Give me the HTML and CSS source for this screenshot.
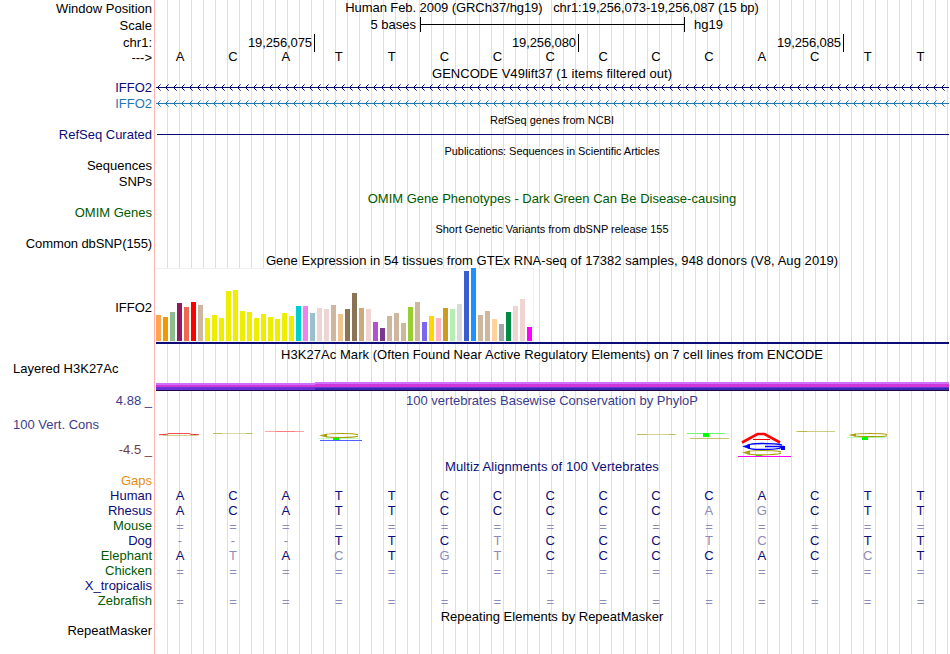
FILE: index.html
```html
<!DOCTYPE html>
<html lang="en">
<head>
    <meta charset="UTF-8">
    <title>Human chr1:19,256,073-19,256,087 hg19</title>
    <link rel="stylesheet" href="styles.css">
</head>
<body>

<div class="browser">
    <div class="row position"><div class="label">Window Position</div><div class="title">Human Feb. 2009 (GRCh37/hg19)   chr1:19,256,073-19,256,087 (15 bp)</div></div>
    <div class="row scale">
        <div class="label">Scale</div>
        <div class="scale-track"><span class="scale-size">5 bases</span><span class="scale-bar"></span><span>hg19</span></div>
    </div>
    <div class="row ruler">
        <div class="label">chr1:</div>
        <div class="ruler-track"><span>19,256,075</span><span>19,256,080</span><span>19,256,085</span></div>
    </div>
    <div class="row sequence"><div class="label arrow">---&gt;</div><div class="bases" data-bases="ACATTCCCCCCACTT"></div></div>

    <div class="row gencode-title"><div class="title gencode">GENCODE V49lift37 (1 items filtered out)</div></div>
    <div class="row gene navy">
        <div class="label">IFFO2</div>
        <svg class="gene-line" width="793" height="7" shape-rendering="crispEdges">
            <defs>
                <pattern id="chevron" width="8" height="7" patternUnits="userSpaceOnUse">
                    <path d="M1 3h1v1h-1zM2 2h1v1h-1zM2 4h1v1h-1zM3 1h1v1h-1zM3 5h1v1h-1z" fill="currentColor"/>
                    <path d="M4 0h1v1h-1zM4 6h1v1h-1z" fill="currentColor" opacity=".6"/>
                </pattern>
            </defs>
            <rect width="793" height="7" fill="url(#chevron)"/>
            <rect y="3" width="793" height="1" fill="currentColor"/>
        </svg>
    </div>
    <div class="row gene blue">
        <div class="label">IFFO2</div>
        <svg class="gene-line" width="793" height="7" shape-rendering="crispEdges">
            <defs>
                <pattern id="chevron-blue" width="8" height="7" patternUnits="userSpaceOnUse">
                    <path d="M1 3h1v1h-1zM2 2h1v1h-1zM2 4h1v1h-1zM3 1h1v1h-1zM3 5h1v1h-1z" fill="currentColor"/>
                    <path d="M4 0h1v1h-1zM4 6h1v1h-1z" fill="currentColor" opacity=".6"/>
                </pattern>
            </defs>
            <rect width="793" height="7" fill="url(#chevron-blue)"/>
            <rect y="3" width="793" height="1" fill="currentColor"/>
        </svg>
    </div>

    <div class="row small-title"><div class="title small">RefSeq genes from NCBI</div></div>
    <div class="row curated navy"><div class="label">RefSeq Curated</div><div class="solid-line"></div></div>

    <div class="row small-title"><div class="title small pubs">Publications: Sequences in Scientific Articles</div></div>
    <div class="row sequences"><div class="label">Sequences</div></div>
    <div class="row snps"><div class="label">SNPs</div></div>

    <div class="row omim-title green"><div class="title">OMIM Gene Phenotypes - Dark Green Can Be Disease-causing</div></div>
    <div class="row omim-genes green"><div class="label">OMIM Genes</div></div>

    <div class="row small-title"><div class="title small">Short Genetic Variants from dbSNP release 155</div></div>
    <div class="row common"><div class="label">Common dbSNP(155)</div></div>

    <div class="row gtex-title"><div class="title gtex">Gene Expression in 54 tissues from GTEx RNA-seq of 17382 samples, 948 donors (V8, Aug 2019)</div></div>
    <div class="row expression">
        <div class="label">IFFO2</div>
        <div class="chart-track"><div class="chart" id="chart"></div></div>
    </div>

    <div class="row h3k-title"><div class="title h3k">H3K27Ac Mark (Often Found Near Active Regulatory Elements) on 7 cell lines from ENCODE</div></div>
    <div class="row layered">
        <div class="label left">Layered H3K27Ac</div>
        <svg class="signal" width="793" height="9" shape-rendering="crispEdges">
            <rect y="1" width="793" height="2" fill="#d070ff"/>
            <rect y="3" width="793" height="2" fill="#d038d8"/>
            <rect y="5" width="793" height="3" fill="#6a34d8"/>
            <rect x="159" width="634" height="2" fill="#d070ff"/>
            <rect x="159" y="2" width="634" height="3" fill="#d038d8"/>
            <rect x="159" y="6" width="634" height="2" fill="#3828b0"/>
            <rect y="8" width="793" height="1" fill="#1c0848"/>
        </svg>
    </div>

    <div class="row phylop-title slate"><div class="label">4.88 _</div><div class="title phylop">100 vertebrates Basewise Conservation by PhyloP</div></div>
    <div class="row conservation">
        <div class="cons-labels">
            <div class="label left slate">100 Vert. Cons</div>
            <div class="label minimum">-4.5 _</div>
        </div>
        <svg class="logos" width="794" height="50" viewBox="155 409 794 50">
            <g fill="none" stroke-linecap="butt">
                <path d="M163 435.5H197" stroke="#b8b040" opacity=".6"/>
                <path d="M159 434.8L168 434.2M190 434.2L199 434.8" stroke="#f03030"/>
                <path d="M168 433.5H190" stroke="#ff5050"/>
                <path d="M213 433.5H253" stroke="#c0bc60" opacity=".55"/>
                <path d="M213 433.5H222M246 433.5H252" stroke="#b0ac30" opacity=".6"/>
                <path d="M265 431.5H304" stroke="#ff8080" opacity=".7"/>
                <path d="M276 431.5H295" stroke="#ff6060" opacity=".6"/>
                <path d="M318 438.5H360" stroke="#b0ffb0" opacity=".7"/>
                <path d="M358 434.8C355 433.5 350 433.5 341 433.5C330 433.5 324 434.3 324 435.5C324 436.8 330 437.5 341 437.5C350 437.5 355 437.5 358 436" stroke="#a8a010" stroke-width="1.2"/>
                <path d="M320 440.5H362" stroke="#5060ff"/>
                <path d="M637 434.5H676" stroke="#c0bc60" opacity=".65"/>
                <path d="M637 434.5H647M669 434.5H675" stroke="#b0ac30" opacity=".6"/>
                <path d="M687 433.5H725" stroke="#70f870"/>
                <path d="M690 438.5H729" stroke="#b8b450" opacity=".8"/>
                <path d="M742 442.5L757.5 434H764.5L780 442.5" stroke="#f00" stroke-width="2.6"/>
                <path d="M753 439.5H770" stroke="#f00"/>
                <path d="M782 445C777 443.5 770 443.5 762 443.5C752 443.5 747 444.5 747 446.5C747 448.5 752 449.5 762 449.5C770 449.5 778 449.5 782 447.5M765 446.5H784" stroke="#00f" stroke-width="1.3"/>
                <path d="M781 451.8C776 450.5 770 450.5 762 450.5C752 450.5 746 451 746 452.5C746 454 752 454.8 762 454.8C770 454.8 777 454.5 781 453.3" stroke="#a8a010" stroke-width="1.2"/>
                <path d="M738 456.5H791" stroke="#f0f"/>
                <path d="M796 431.5H835" stroke="#c0bc60" opacity=".75"/>
                <path d="M798 431.5H807" stroke="#b0ac30" opacity=".7"/>
                <path d="M847 437.5H885" stroke="#a0ffa0" opacity=".8"/>
                <path d="M887 434.5C884 433.5 878 433.5 870 433.5C859 433.5 853 434 853 435C853 436.2 859 436.6 870 436.6C878 436.6 884 436.6 887 435.7" stroke="#a8a010" stroke-width="1.2"/>
            </g>
            <path d="M319 435.5L327 433.5V437.5ZM848 435L856 433.5V436.8ZM742 452.5L750 450.5V455Z" fill="#a8a010"/>
            <path d="M742 446.5L750 444V449ZM781 446H785V450H781Z" fill="#00f"/>
            <path d="M333 438H339V440H333ZM703 433H709V437H703ZM862 437H868V440H862Z" fill="#0f0"/>
            <path d="M756 455H762V456H756Z" fill="#50c810"/>
        </svg>
    </div>

    <div class="row multiz-title navy"><div class="title multiz">Multiz Alignments of 100 Vertebrates</div></div>
    <div class="row species"><div class="label orange">Gaps</div></div>
    <div class="row species navy"><div class="label">Human</div><div class="bases" data-bases="ACATTCCCCCCACTT"></div></div>
    <div class="row species navy"><div class="label">Rhesus</div><div class="bases" data-bases="ACATTCCCCCagCTT"></div></div>
    <div class="row species navy"><div class="label green">Mouse</div><div class="bases unaligned" data-bases="==============="></div></div>
    <div class="row species navy"><div class="label">Dog</div><div class="bases" data-bases="---TTCtCCCtcCTT"></div></div>
    <div class="row species navy"><div class="label green">Elephant</div><div class="bases" data-bases="AtAcTgtCCCCACcT"></div></div>
    <div class="row species navy"><div class="label green">Chicken</div><div class="bases unaligned" data-bases="==============="></div></div>
    <div class="row species navy"><div class="label">X_tropicalis</div></div>
    <div class="row species navy"><div class="label green">Zebrafish</div><div class="bases unaligned" data-bases="==============="></div></div>

    <div class="row repeat-title"><div class="title">Repeating Elements by RepeatMasker</div></div>
    <div class="row species"><div class="label">RepeatMasker</div></div>
</div>

<script src="script.js"></script>
</body>
</html>
```

FILE: styles.css
```css
body {
    margin: 0;
    background: #fff;
    font-family: "Liberation Sans", Arial, sans-serif;
    font-size: 13px;
    color: #000;
}
.browser {
    width: 949px;
    height: 654px;
    overflow: hidden;
    display: flex;
    flex-direction: column;
    background:
        linear-gradient(#ffb4b4, #ffb4b4) 154px 0 / 1px 100% no-repeat,
        repeating-linear-gradient(90deg, #dcdcfa 0, #dcdcfa 1px, transparent 1px, transparent 12px) 167px 0 / 782px 100% no-repeat;
}
.row {
    display: flex;
    flex: none;
    height: 15px;
    line-height: 15px;
    white-space: pre;
}
.label {
    width: 152px;
    flex: none;
    text-align: right;
}
.label.left {
    text-align: left;
    padding-left: 13px;
    box-sizing: border-box;
}
.title {
    width: 794px;
    margin-left: auto;
    text-align: center;
}
.label + .title {
    margin-left: 3px;
}
.small {
    font-size: 11px;
}

/* track colours */
.navy {
    color: #0c0c78;
}
.blue {
    color: #1f77b4;
}
.green {
    color: #005a00;
}
.slate {
    color: #3c3c8c;
}
.orange {
    color: #e68c0f;
}

/* position, scale and ruler */
.position {
    height: 16px;
    line-height: 16px;
}
.position .label {
    line-height: 18px;
}
.position .title {
    letter-spacing: -0.075px;
}
.scale {
    height: 18px;
    line-height: 18px;
}
.scale .label {
    line-height: 20px;
}
.scale-track {
    display: flex;
}
.scale-size {
    width: 264px;
    margin-right: 4px;
    text-align: right;
}
.scale-bar {
    width: 263px;
    height: 15px;
    margin: 1px 9px 0 0;
    border-left: 1px solid #000;
    border-right: 1px solid #000;
    background: linear-gradient(#000, #000) 0 7px / 100% 1px no-repeat;
}
.ruler {
    height: 17px;
    line-height: 18px;
}
.ruler-track {
    display: grid;
    grid-template-columns: 163px 264px 265px;
    height: 15px;
}
.ruler-track span {
    border-right: 1px solid #000;
    padding-right: 2px;
    text-align: right;
    letter-spacing: -0.1px;
}
.bases {
    display: grid;
    grid-template-columns: repeat(15, 52.9px);
    margin-left: 1.6px;
    text-align: center;
}
.sequence {
    line-height: 12px;
}
.sequence .arrow {
    line-height: 14px;
}
.faded {
    color: #8c8cb8;
}

/* genes */
.gencode-title {
    height: 14px;
}
.gencode {
    letter-spacing: 0.04px;
}
.gene {
    height: 16px;
    line-height: 16px;
}
.gene-line {
    margin: 4px 0 0 4px;
}
.small-title {
    height: 16px;
    line-height: 16px;
}
.solid-line {
    width: 792px;
    height: 1px;
    margin: 6px 0 0 5px;
    background: #0c0c78;
}
.pubs {
    letter-spacing: -0.06px;
}
.curated, .sequences, .omim-genes, .common {
    line-height: 13px;
}
.common .label {
    letter-spacing: -0.1px;
}
.snps {
    height: 16px;
    line-height: 16px;
}
.omim-title, .gtex-title {
    height: 16px;
    line-height: 18px;
}
.gtex {
    letter-spacing: 0.055px;
}

/* expression chart */
.expression {
    height: 78px;
    line-height: 79px;
}
.chart-track {
    width: 793px;
    height: 74px;
    margin-left: 4px;
    border-bottom: 2px solid #0c0c78;
}
.chart {
    display: flex;
    align-items: flex-end;
    gap: 2px;
    width: 378px;
    height: 74px;
    box-sizing: border-box;
    border: 1px solid #f0f0f0;
    border-left: 0;
    background: #fff;
}
.bar {
    width: 5px;
    flex: none;
}

/* histone marks */
.h3k-title {
    height: 17px;
    line-height: 17px;
}
.h3k {
    letter-spacing: 0.05px;
}
.layered {
    height: 30px;
    line-height: 11px;
}
.signal {
    margin: 19px 0 0 4px;
}

/* conservation */
.phylop-title {
    height: 16px;
    line-height: 16px;
}
.conservation {
    height: 50px;
}
.cons-labels {
    display: flex;
    flex-direction: column;
    justify-content: space-between;
    height: 40px;
    padding: 8px 3px 2px 0;
}
.minimum {
    color: #783c3c;
}
.multiz {
    letter-spacing: 0.08px;
}

/* alignments */
.species {
    line-height: 13px;
}
.unaligned {
    line-height: 15px;
}
```

FILE: script.js
```js
const bars = [
    [26, '#ffa54f'], [24, '#ee9a00'], [29, '#8fbc8f'], [38, '#8b1c62'], [34, '#ee6a50'],
    [39, '#ff0000'], [36, '#cdb79e'], [23, '#eeee00'], [26, '#eeee00'], [23, '#eeee00'],
    [50, '#eeee00'], [51, '#eeee00'], [30, '#eeee00'], [29, '#eeee00'], [23, '#eeee00'],
    [27, '#eeee00'], [24, '#eeee00'], [22, '#eeee00'], [28, '#eeee00'], [25, '#eeee00'],
    [35, '#00cdcd'], [35, '#ee82ee'], [28, '#9ac0cd'], [33, '#eed5d2'], [32, '#eed5d2'],
    [36, '#cdb79e'], [27, '#eec591'], [32, '#8b7355'], [48, '#8b7355'], [33, '#cdaa7d'],
    [32, '#eed5d2'], [19, '#b452cd'], [13, '#7a378b'], [25, '#cdb79e'], [28, '#cdb79e'],
    [18, '#cdb79e'], [34, '#9acd32'], [39, '#cdb79e'], [19, '#7a67ee'], [25, '#ffd700'],
    [23, '#ffb6c1'], [33, '#cd9b1d'], [32, '#b4eeb4'], [37, '#d9d9d9'], [70, '#3a5fcd'],
    [73, '#1e90ff'], [26, '#cdb79e'], [30, '#cdb79e'], [22, '#ffd39b'], [17, '#a6a6a6'],
    [29, '#008b45'], [35, '#eed5d2'], [42, '#eed5d2'], [14, '#ff00ff']
];

const chart = document.getElementById('chart');
bars.forEach(([height, color]) => {
    const bar = document.createElement('div');
    bar.className = 'bar';
    bar.style.height = `${height}px`;
    bar.style.background = color;
    chart.appendChild(bar);
});

// Lower case marks a base that differs from the human sequence
document.querySelectorAll('.bases').forEach(track => {
    for (const base of track.dataset.bases) {
        const cell = document.createElement('span');
        cell.textContent = base.toUpperCase();
        if (!/[A-Z]/.test(base)) cell.className = 'faded';
        track.appendChild(cell);
    }
});
```
